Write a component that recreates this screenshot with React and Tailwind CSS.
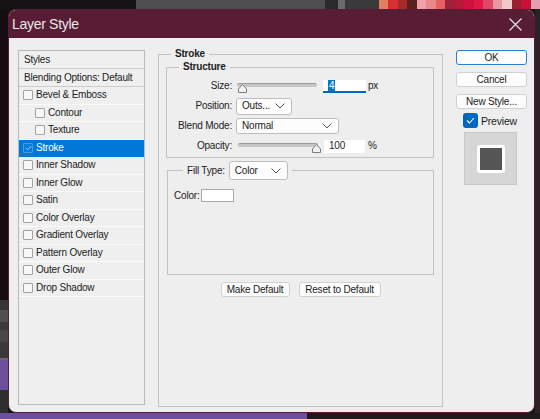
import React from 'react';

const swatches = ['#e0805f', '#d83030', '#a82a2a', '#5a2020', '#f0a0a8', '#e88888', '#e86060', '#a02040', '#b81838', '#d01040', '#e01848', '#e04866', '#e898a0', '#f0c8c8', '#982030', '#c81038', '#e0a0b0'];

const leftStrip = [
  { h: 'h-[291px]', c: 'bg-[#150d0f]' },
  { h: 'h-[10px]', c: 'bg-[#363636]' },
  { h: 'h-[12px]', c: 'bg-[#4f4f4f]' },
  { h: 'h-[8px]', c: 'bg-[#3a3a3a]' },
  { h: 'h-[12px]', c: 'bg-[#474747]' },
  { h: 'h-[16px]', c: 'bg-[#3a3a3a]' },
  { h: 'h-[2px]', c: 'bg-[#6a6a6a]' },
  { h: 'h-[30px]', c: 'bg-[#6b4f9c]' },
  { h: 'h-[23px]', c: 'bg-[#2e2e2e]' },
];

const styleRows = [
  { label: 'Bevel & Emboss' },
  { label: 'Contour', sub: true },
  { label: 'Texture', sub: true },
  { label: 'Stroke', active: true },
  { label: 'Inner Shadow' },
  { label: 'Inner Glow' },
  { label: 'Satin' },
  { label: 'Color Overlay' },
  { label: 'Gradient Overlay' },
  { label: 'Pattern Overlay' },
  { label: 'Outer Glow' },
  { label: 'Drop Shadow' },
];

const Chevron = () => (
  <svg width="10" height="6" viewBox="0 0 10 6" className="shrink-0">
    <polyline points="0.5,0.5 5,5 9.5,0.5" fill="none" stroke="#555" strokeWidth="1" />
  </svg>
);

const Dropdown = ({ value, w, h = 'h-[17px]' }) => (
  <div className={`${w} ${h} flex items-center justify-between pl-[5px] pr-[6px] bg-[#fdfdfd] border border-[#bdbdbd] rounded-[3px]`}>
    <span>{value}</span>
    <Chevron />
  </div>
);

const Slider = ({ thumb }) => (
  <div className="relative w-[80px] h-[12px]">
    <div className="absolute left-0 right-0 top-[1px] h-[4px] rounded-full bg-[#c6c6c6] border-t border-[#9c9c9c]" />
    <svg width="9" height="9" viewBox="0 0 9 9" className={`absolute top-[2px] ${thumb}`}>
      <path d="M4.5 0.5 L8.5 5 L8.5 8.5 L0.5 8.5 L0.5 5 Z" fill="#f2f2f2" stroke="#7c7c7c" strokeWidth="1" />
    </svg>
  </div>
);

const Button = ({ children, w, primary }) => (
  <div className={`${w} h-[15px] flex items-center justify-center bg-[#fdfdfd] rounded-[3px] border ${primary ? 'border-[#2a7fd0]' : 'border-[#d0d0d0]'}`}>
    {children}
  </div>
);

const StructureRow = ({ label, children }) => (
  <div className="h-[20px] flex items-center">
    <div className="w-[65px] text-right">{label}</div>
    <div className="ml-[4px] flex items-center">{children}</div>
  </div>
);

export default function App() {
  return (
    <div className="w-[540px] h-[419px] overflow-hidden flex flex-col bg-[#151515] font-['Liberation_Sans',Arial,sans-serif] text-[10px] leading-[12px] tracking-[-0.2px] text-[#1c1c1c]">
      {/* desktop behind, top */}
      <div className="h-[9px] flex shrink-0">
        <div className="w-[137px] bg-[#151313]" />
        <div className="w-[190px] bg-[#4e4e4e]" />
        <div className="w-[13px] bg-[#2a2a2a]" />
        <div className="w-[7px] bg-[#6a6a6a]" />
        <div className="w-[34px] bg-[#3a3a3a]" />
        {swatches.map((c, i) => (
          <div key={i} className="w-[9.5px] shrink-0" style={{ backgroundColor: c }} />
        ))}
      </div>

      <div className="h-[404px] flex shrink-0">
        <div className="w-[8px] flex flex-col">
          {leftStrip.map((s, i) => <div key={i} className={`${s.h} ${s.c}`} />)}
        </div>

        {/* dialog */}
        <div className="w-[527px] flex flex-col border border-[#5a1c34] rounded-[8px] overflow-hidden bg-[#eeeeee]">
          <div className="h-[28px] shrink-0 bg-[#581c34] flex items-center justify-between pl-[3px] pr-[12px]">
            <span className="text-[14px] leading-[16px] tracking-[-0.3px] text-[#e8e8e8]">Layer Style</span>
            <svg width="13" height="13" viewBox="0 0 13 13">
              <path d="M0.5 0.5 L12.5 12.5 M12.5 0.5 L0.5 12.5" stroke="#e4e4e4" strokeWidth="1.2" />
            </svg>
          </div>

          <div className="flex-1 flex items-start pl-[9px] pt-[10px]">
            {/* styles list */}
            <div className="mt-[2px] w-[127px] h-[355px] border border-[#b8b8b8] bg-[#efefef] flex flex-col">
              <div className="h-[18px] flex items-center pl-[5px] border-b border-[#cdcdcd]">Styles</div>
              <div className="h-[18px] flex items-center pl-[5px] border-b border-[#cdcdcd]">Blending Options: Default</div>
              {styleRows.map(r => (
                <div
                  key={r.label}
                  className={`h-[17.5px] flex items-center border-b ${r.active ? 'bg-[#0078d7] text-white border-[#0078d7]' : 'border-[#fafafa]'} ${r.sub ? 'pl-[16px]' : 'pl-[4px]'}`}
                >
                  <div className={`w-[10px] h-[10px] flex items-center justify-center border rounded-[1px] ${r.active ? 'border-[#4a9ae2] bg-[#0a7ad8]' : 'border-[#a3a3a3] bg-[#f7f7f7]'}`}>
                    {r.active && (
                      <svg width="7" height="6" viewBox="0 0 7 6">
                        <polyline points="0.8,3 2.7,4.8 6.2,1" fill="none" stroke="#9fcaf2" strokeWidth="1" />
                      </svg>
                    )}
                  </div>
                  <span className="ml-[3px]">{r.label}</span>
                </div>
              ))}
            </div>

            {/* stroke settings */}
            <fieldset className="ml-[13px] w-[285px] h-[359px] border border-[#c2c2c2] px-[7px]">
              <legend className="ml-[5px] px-[4px] font-bold">Stroke</legend>

              <fieldset className="mt-[1px] mr-[1px] border border-[#c2c2c2] pt-[3px] pb-[1px]">
                <legend className="ml-[12px] px-[4px] font-bold">Structure</legend>
                <StructureRow label="Size:">
                  <div className="ml-[1px] mt-[3px]"><Slider thumb="left-[1px]" /></div>
                  <div className="ml-[6px] w-[43px] h-[13px] bg-white border-b-2 border-[#0067c0] flex items-center pl-[5px]">
                    <span className="bg-[#0078d7] text-white px-[1px] leading-[11px]">4</span>
                  </div>
                  <span className="ml-[2px]">px</span>
                </StructureRow>
                <StructureRow label="Position:">
                  <Dropdown value="Outs..." w="w-[56px]" />
                </StructureRow>
                <StructureRow label="Blend Mode:">
                  <Dropdown value="Normal" w="w-[103px]" h="h-[16px]" />
                </StructureRow>
                <StructureRow label="Opacity:">
                  <div className="ml-[2px] mt-[3px]"><Slider thumb="right-[-3px]" /></div>
                  <div className="ml-[6px] w-[41px] h-[13px] bg-white flex items-center pl-[5px]">100</div>
                  <span className="ml-[3px]">%</span>
                </StructureRow>
              </fieldset>

              <fieldset className="mt-[3px] mx-[1px] h-[114px] border border-[#c2c2c2]">
                <legend className="ml-[15px] px-[4px] flex items-center gap-[4px]">
                  <span>Fill Type:</span>
                  <Dropdown value="Color" w="w-[59px]" h="h-[19px]" />
                </legend>
                <div className="pt-[9px] pl-[6px] flex items-center">
                  <span>Color:</span>
                  <div className="ml-[2px] w-[33px] h-[13px] bg-white border border-[#a9a9a9]" />
                </div>
              </fieldset>

              <div className="mt-[7px] flex justify-center gap-[9px]">
                <Button w="w-[69px]">Make Default</Button>
                <Button w="w-[82px]">Reset to Default</Button>
              </div>
            </fieldset>

            {/* buttons */}
            <div className="ml-[13px] w-[71px] mt-[2px] flex flex-col">
              <Button w="w-[71px]" primary>OK</Button>
              <div className="mt-[7px]"><Button w="w-[71px]">Cancel</Button></div>
              <div className="mt-[7px]"><Button w="w-[71px]">New Style...</Button></div>
              <div className="mt-[4px] ml-[7px] flex items-center">
                <div className="w-[15px] h-[15px] rounded-[3px] bg-[#0067c0] flex items-center justify-center">
                  <svg width="9" height="7" viewBox="0 0 9 7">
                    <polyline points="1,3.5 3.4,6 8,1" fill="none" stroke="#fff" strokeWidth="1.1" />
                  </svg>
                </div>
                <span className="ml-[3px] text-[10.5px]">Preview</span>
              </div>
              <div className="mt-[4px] ml-[8px] w-[53px] h-[53px] bg-[#d6d6d6] border border-[#c8c8c8] flex items-center justify-center">
                <div className="w-[28px] h-[28px] bg-[#555555] border-[3px] border-white rounded-[3px]" />
              </div>
            </div>
          </div>
        </div>

        <div className="w-[5px] bg-[#2a2226]" />
      </div>

      <div className="h-[6px] flex shrink-0">
        <div className="w-[307px] bg-[#6b4f9c]" />
        <div className="flex-1 bg-[#1e1a1c]" />
      </div>
    </div>
  );
}
